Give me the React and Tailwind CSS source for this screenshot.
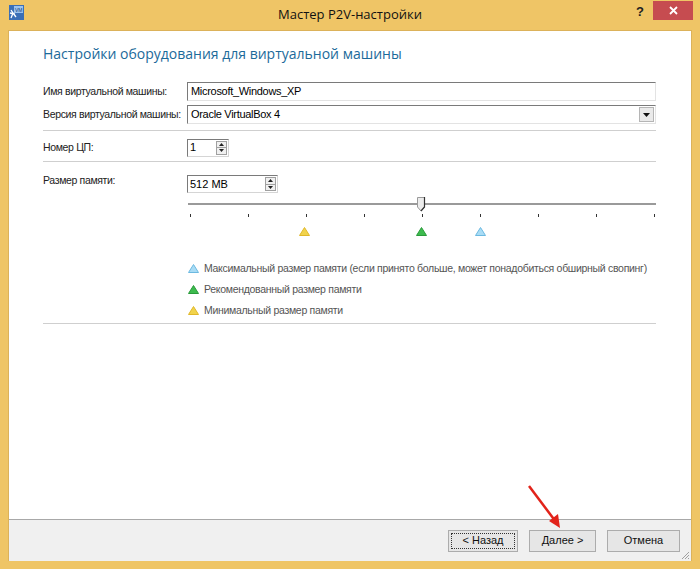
import React from 'react';

const Tri = ({ color, stroke }) => (
  <svg width="11" height="9" viewBox="0 0 11 9">
    <path d="M5.5 0.5 L10.5 8.5 L0.5 8.5 Z" fill={color} stroke={stroke} strokeWidth="1" />
  </svg>
);

const Spin = ({ value, width }) => (
  <div className={`flex items-center h-[18px] ${width} border border-[#7a7a7a] border-r-[#d5d5d5] border-b-[#d5d5d5] bg-white`}>
    <span className="flex-1 pl-[2px] text-[11px] leading-none">{value}</span>
    <div className="flex flex-col w-[11px] h-[14px] mr-[1px] border border-[#a0a0a0] bg-[#f0f0f0]">
      <div className="flex-1 flex items-center justify-center">
        <svg width="5" height="3" viewBox="0 0 5 3"><path d="M2.5 0 L5 3 L0 3 Z" fill="#222" /></svg>
      </div>
      <div className="h-px bg-[#a0a0a0]" />
      <div className="flex-1 flex items-center justify-center">
        <svg width="5" height="3" viewBox="0 0 5 3"><path d="M0 0 L5 0 L2.5 3 Z" fill="#222" /></svg>
      </div>
    </div>
  </div>
);

const Btn = ({ children, focused, w }) => (
  <button className={`${w} h-[22px] border border-[#acacac] bg-[#e6e6e6] text-[11px] text-[#111] flex items-center justify-center p-[2px]`}>
    <span className={`w-full h-full flex items-center justify-center ${focused ? 'border border-dotted border-[#333]' : ''}`}>{children}</span>
  </button>
);

export default function App() {
  const ticks = [0, 1, 2, 3, 4, 5, 6, 7, 8];
  const label = 'w-[144px] text-[10.5px] tracking-[-0.35px] whitespace-nowrap text-[#222]';
  return (
    <div className="relative w-[700px] h-[569px] bg-[#efc566] flex flex-col overflow-hidden" style={{ fontFamily: '"Liberation Sans", Arial, sans-serif' }}>
      {/* title bar */}
      <div className="relative h-[30px] flex items-start">
        <div className="ml-[9px] mt-[5px] w-[15px] h-[15px]">
          <svg width="15" height="15" viewBox="0 0 15 15">
            <rect x="0" y="0" width="15" height="15" fill="#3b6fb6" />
            <rect x="5" y="1" width="9" height="7" fill="#9cc3ee" />
            <text x="6" y="7" fontSize="5" fill="#13407a" fontFamily="Liberation Sans">VM</text>
            <path d="M2 5 L4 8 L2 13 M4 8 L7 12 M1 8 L6 9" stroke="#fff" strokeWidth="1.3" fill="none" />
          </svg>
        </div>
        <div className="absolute left-0 right-0 top-[5px] text-center text-[13px] text-[#111]" style={{ fontFamily: '"Open Sans", sans-serif' }}>Мастер P2V-настройки</div>
        <div className="absolute left-[636px] top-[2px] text-[13px] font-bold text-[#222]">?</div>
        <div className="absolute left-[653px] top-[1px] w-[40px] h-[19px] bg-[#c64c50] flex items-center justify-center">
          <svg width="9" height="9" viewBox="0 0 9 9"><path d="M1 1 L8 8 M8 1 L1 8" stroke="#fff" strokeWidth="1.8" /></svg>
        </div>
      </div>

      {/* body */}
      <div className="mx-[8px] flex-1 flex flex-col border border-[#dcb25a] border-b-0">
        <div className="flex-1 bg-white flex flex-col pl-[34px] pr-[35px]">
          <div className="mt-[12px] h-[22px] text-[14px] leading-[22px] text-[#1c6a9a]" style={{ fontFamily: '"Open Sans", sans-serif' }}>
            Настройки оборудования для виртуальной машины
          </div>

          <div className="mt-[17px] flex items-center h-[19px]">
            <div className={label}>Имя виртуальной машины:</div>
            <div className="flex-1 h-[19px] border border-[#7a7a7a] border-r-[#e3e3e3] border-b-[#e3e3e3] flex items-center pl-[3px] text-[11px] tracking-[-0.3px]">Microsoft_Windows_XP</div>
          </div>
          <div className="mt-[4px] flex items-center h-[19px]">
            <div className={label}>Версия виртуальной машины:</div>
            <div className="flex-1 h-[19px] border border-[#7a7a7a] border-r-[#e3e3e3] border-b-[#e3e3e3] flex items-center pl-[3px] text-[11px] tracking-[-0.3px]">
              <span className="flex-1">Oracle VirtualBox 4</span>
              <div className="w-[15px] h-[15px] mr-[1px] bg-[#eaeaea] border border-[#b5b5b5] flex items-center justify-center">
                <svg width="7" height="4" viewBox="0 0 7 4"><path d="M0 0 L7 0 L3.5 4 Z" fill="#111" /></svg>
              </div>
            </div>
          </div>
          <div className="mt-[6px] h-px bg-[#cfcfcf]" />

          <div className="mt-[7px] flex items-center h-[19px]">
            <div className={label}>Номер ЦП:</div>
            <Spin value="1" width="w-[42px]" />
          </div>
          <div className="mt-[4px] h-px bg-[#cfcfcf]" />

          <div className="mt-[13px] flex items-start h-[18px]">
            <div className={`${label} mt-[-2px]`}>Размер памяти:</div>
            <Spin value="512 MB" width="w-[91px]" />
          </div>

          {/* slider */}
          <div className="ml-[144px] mt-[4px] relative h-[14px]">
            <div className="absolute left-[1px] right-0 top-[6px] h-[2px] bg-[#9a9a9a]" />
            <div className="absolute left-[230px] top-0">
              <svg width="9" height="15" viewBox="0 0 9 15">
                <path d="M0.5 0.5 L7.5 0.5 L7.5 10 L4 14 L0.5 10 Z" fill="#ececec" stroke="#9a9a9a" />
                <path d="M7.5 0 L7.5 10 L4 14" stroke="#333" strokeWidth="1.2" fill="none" />
              </svg>
            </div>
          </div>
          <div className="ml-[144px] mt-[3px] h-[3px] flex justify-between pl-[3px] pr-[1px]">
            {ticks.map((t) => (
              <div key={t} className="w-px h-[3px] bg-[#333]" />
            ))}
          </div>
          <div className="ml-[144px] mt-[10px] relative h-[9px]">
            <div className="absolute left-[112px] top-0"><Tri color="#f1d34c" stroke="#e0b82a" /></div>
            <div className="absolute left-[229px] top-0"><Tri color="#3dbb4e" stroke="#2a9a3a" /></div>
            <div className="absolute left-[288px] top-0"><Tri color="#a9dcf5" stroke="#6cb9e0" /></div>
          </div>

          <div className="ml-[145px] mt-[22px] flex flex-col text-[10.5px] tracking-[-0.3px] whitespace-nowrap text-[#555]">
            <div className="h-[21px] flex items-center gap-[5px]"><Tri color="#a9dcf5" stroke="#6cb9e0" /><span>Максимальный размер памяти (если принято больше, может понадобиться обширный свопинг)</span></div>
            <div className="h-[21px] flex items-center gap-[5px]"><Tri color="#3dbb4e" stroke="#2a9a3a" /><span>Рекомендованный размер памяти</span></div>
            <div className="h-[21px] flex items-center gap-[5px]"><Tri color="#f1d34c" stroke="#e0b82a" /><span>Минимальный размер памяти</span></div>
          </div>
          <div className="mt-[2px] h-px bg-[#cfcfcf]" />
        </div>

        {/* footer */}
        <div className="relative h-[42px] bg-[#f0f0f0] border-t border-[#a8a8a8] flex items-center justify-end gap-[11px] pr-[11px]">
          <Btn focused w="w-[70px]">&lt; Назад</Btn>
          <Btn w="w-[67px]">Далее &gt;</Btn>
          <Btn w="w-[73px]">Отмена</Btn>
          <svg className="absolute right-[1px] bottom-[1px]" width="10" height="10" viewBox="0 0 10 10">
            <path d="M9 2 L2 9 M9 5 L5 9 M9 8 L8 9" stroke="#a0a0a0" strokeWidth="1" />
          </svg>
        </div>
      </div>
      <div className="h-[8px]" />

      {/* red arrow annotation */}
      <svg className="absolute left-0 top-0 pointer-events-none" width="700" height="569">
        <path d="M529 486 L556 522" stroke="#e2231a" strokeWidth="2.5" />
        <path d="M560 528 L549 521 L558 514 Z" fill="#e2231a" />
      </svg>
    </div>
  );
}
